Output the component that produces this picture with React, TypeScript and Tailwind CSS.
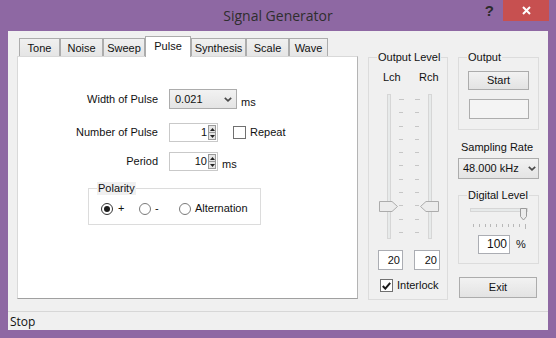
import React from 'react';

const tabs = [
  { name: 'Tone', cls: 'w-[41px]' },
  { name: 'Noise', cls: 'w-[43px]' },
  { name: 'Sweep', cls: 'w-[42px]' },
  { name: 'Pulse', cls: 'w-[46px]', active: true },
  { name: 'Synthesis', cls: 'w-[55px]' },
  { name: 'Scale', cls: 'w-[43px]' },
  { name: 'Wave', cls: 'w-[39px]' },
];

function Chevron() {
  return (
    <svg width="8" height="5" viewBox="0 0 8 5">
      <path d="M0.8 0.8 L4 3.8 L7.2 0.8" stroke="#4a4a4a" strokeWidth="1.7" fill="none" />
    </svg>
  );
}

function Spin() {
  return (
    <div className="flex h-[15px] w-[8px] flex-col border border-[#9a9a9a] bg-[#e6e6e6]">
      <div className="flex flex-1 items-center justify-center border-b border-[#9a9a9a]">
        <svg width="5" height="3" viewBox="0 0 5 3">
          <path d="M0 3 L2.5 0 L5 3Z" fill="#222" />
        </svg>
      </div>
      <div className="flex flex-1 items-center justify-center">
        <svg width="5" height="3" viewBox="0 0 5 3">
          <path d="M0 0 L2.5 3 L5 0Z" fill="#222" />
        </svg>
      </div>
    </div>
  );
}

function SpinBox({ value }: { value: string }) {
  return (
    <div className="flex h-[19px] w-[49px] items-center justify-end gap-[1px] border border-[#c9c9c9] bg-white pr-[1px]">
      <span className="leading-none">{value}</span>
      <Spin />
    </div>
  );
}

function Check({ checked }: { checked?: boolean }) {
  return (
    <div className="flex h-[13px] w-[13px] items-center justify-center border border-[#707070] bg-white">
      {checked && (
        <svg width="9" height="8" viewBox="0 0 9 8">
          <path d="M0.8 4 L3.3 6.6 L8.2 0.8" stroke="#1a1a1a" strokeWidth="2" fill="none" />
        </svg>
      )}
    </div>
  );
}

function Radio({ checked }: { checked?: boolean }) {
  return (
    <div
      className={`flex h-[12px] w-[12px] items-center justify-center rounded-full border bg-white ${
        checked ? 'border-[#333333]' : 'border-[#7a7a7a]'
      }`}
    >
      {checked && <div className="h-[6px] w-[6px] rounded-full bg-[#1c1c1c]" />}
    </div>
  );
}

function Group({ label, className, children }: { label: string; className: string; children?: React.ReactNode }) {
  return (
    <div className={`relative border border-[#dcdcdc] ${className}`}>
      <span className="absolute -top-[7px] left-[8px] bg-[#f0f0f0] px-[1px] leading-[13px]">{label}</span>
      {children}
    </div>
  );
}

function Ticks() {
  return (
    <div className="flex h-full flex-col justify-between pt-[5px] pb-[6px]">
      {Array.from({ length: 11 }).map((_, i) => (
        <div key={i} className={`h-[1px] bg-[#c6c6c6] ${i === 0 ? 'w-[5px]' : 'w-[4px]'}`} />
      ))}
    </div>
  );
}

function VSlider({ flip }: { flip?: boolean }) {
  return (
    <div className="relative flex h-full w-[20px] justify-center">
      <div className="h-full w-[4px] border border-[#d6d6d6] bg-[#e7eaea]" />
      <svg className="absolute left-0 top-[107px]" width="19" height="11" viewBox="0 0 19 11">
        <path
          d={flip ? 'M18.5 0.5 H6 L0.5 5.5 L6 10.5 H18.5 Z' : 'M0.5 0.5 H13 L18.5 5.5 L13 10.5 H0.5 Z'}
          fill="#ececec"
          stroke="#acacac"
        />
      </svg>
    </div>
  );
}

export default function App() {
  return (
    <div className="flex h-[338px] w-[556px] flex-col bg-[#8e68a3] font-['Liberation_Sans',Arial,sans-serif] text-[11px] leading-[13px] text-[#111]">
      {/* Title bar */}
      <div className="grid h-[31px] grid-cols-[1fr_auto_1fr] items-center">
        <div />
        <span className="font-['Open_Sans',sans-serif] text-[14px] leading-[18px] text-[#2e2e2e]">Signal Generator</span>
        <div className="flex items-start justify-end self-start pr-[7px]">
          <span className="mr-[9px] mt-[3px] text-[15px] font-bold leading-[15px] text-[#2b2b2b]">?</span>
          <div className="flex h-[21px] w-[46px] items-center justify-center bg-[#c75050]">
            <svg width="9" height="9" viewBox="0 0 9 9">
              <path d="M1 1 L8 8 M8 1 L1 8" stroke="#fff" strokeWidth="2" />
            </svg>
          </div>
        </div>
      </div>

      {/* Client */}
      <div className="mx-[8px] flex h-[299px] flex-col bg-[#f0f0f0]">
        <div className="flex h-[280px] items-start pl-[9px] pt-[5px]">
          {/* Tab control */}
          <div className="flex w-[341px] flex-col">
            <div className="flex h-[20px] items-end pl-[2px]">
              {tabs.map((t) =>
                t.active ? (
                  <div
                    key={t.name}
                    className={`${t.cls} relative z-10 -mb-[1px] flex h-[21px] items-start justify-center border border-b-0 border-[#acacac] bg-white pt-[3px]`}
                  >
                    {t.name}
                  </div>
                ) : (
                  <div
                    key={t.name}
                    className={`${t.cls} flex h-[18px] items-center justify-center border border-b-0 border-[#acacac] bg-gradient-to-b from-[#f0f0f0] to-[#e5e5e5] pt-[2px]`}
                  >
                    {t.name}
                  </div>
                )
              )}
            </div>
            <div className="h-[243px] border border-[#d9d9d9] border-b-[#a0a0a0] border-r-[#b4b4b4] bg-white pt-[32px]">
              <div className="flex h-[20px] items-center">
                <span className="w-[140px] text-right">Width of Pulse</span>
                <div className="ml-[11px] flex h-[20px] w-[68px] items-center justify-between border border-[#acacac] bg-gradient-to-b from-[#f2f2f2] to-[#e4e4e4] pl-[5px] pr-[4px]">
                  <span>0.021</span>
                  <Chevron />
                </div>
                <span className="ml-[4px] self-end">ms</span>
              </div>
              <div className="mt-[14px] flex h-[19px] items-center">
                <span className="w-[140px] text-right">Number of Pulse</span>
                <div className="ml-[11px]">
                  <SpinBox value="1" />
                </div>
                <div className="ml-[15px]">
                  <Check />
                </div>
                <span className="ml-[4px]">Repeat</span>
              </div>
              <div className="mt-[10px] flex h-[19px] items-center">
                <span className="w-[140px] text-right">Period</span>
                <div className="ml-[11px]">
                  <SpinBox value="10" />
                </div>
                <span className="ml-[4px] self-end">ms</span>
              </div>
              <Group label="Polarity" className="ml-[70px] mt-[17px] h-[37px] w-[173px]">
                <div className="flex items-center pl-[12px] pt-[13px]">
                  <div className="flex w-[38px] items-center gap-[5px]">
                    <Radio checked />
                    <span>+</span>
                  </div>
                  <div className="flex w-[40px] items-center gap-[4px]">
                    <Radio />
                    <span>-</span>
                  </div>
                  <div className="flex items-center gap-[4px]">
                    <Radio />
                    <span>Alternation</span>
                  </div>
                </div>
              </Group>
            </div>
          </div>

          {/* Output level */}
          <Group label="Output Level" className="ml-[10px] mt-[21px] h-[243px] w-[80px]">
            <div className="flex pl-[14px] pt-[13px]">
              <span className="w-[36px]">Lch</span>
              <span>Rch</span>
            </div>
            <div className="mt-[10px] flex h-[145px] pl-[10px]">
              <VSlider />
              <Ticks />
              <div className="w-[11px]" />
              <Ticks />
              <VSlider flip />
            </div>
            <div className="mt-[11px] flex pl-[9px]">
              <div className="flex h-[20px] w-[25px] items-center justify-end border border-[#abadb3] bg-white pr-[2px]">20</div>
              <div className="ml-[11px] flex h-[20px] w-[26px] items-center justify-end border border-[#abadb3] bg-white pr-[2px]">20</div>
            </div>
            <div className="mt-[9px] flex items-center pl-[11px]">
              <Check checked />
              <span className="ml-[4px]">Interlock</span>
            </div>
          </Group>

          {/* Right column */}
          <div className="ml-[10px] mt-[21px] flex w-[81px] flex-col">
            <Group label="Output" className="h-[73px] w-[81px]">
              <div className="ml-[9px] mt-[13px] flex h-[19px] w-[61px] items-center justify-center border border-[#acacac] bg-gradient-to-b from-[#f2f2f2] to-[#e3e3e3]">
                Start
              </div>
              <div className="ml-[10px] mt-[9px] h-[20px] w-[60px] border border-[#adadad] bg-[#f4f4f4]" />
            </Group>
            <span className="mt-[11px] pl-[3px]">Sampling Rate</span>
            <div className="mt-[4px] flex h-[21px] w-[81px] items-center justify-between border border-[#acacac] bg-gradient-to-b from-[#f2f2f2] to-[#e4e4e4] pl-[4px] pr-[2px]">
              <span>48.000 kHz</span>
              <Chevron />
            </div>
            <Group label="Digital Level" className="mt-[16px] h-[69px] w-[81px]">
              <div className="relative ml-[11px] mt-[12px] h-[13px] w-[58px]">
                <div className="mt-[4px] h-[4px] w-full border border-[#d6d6d6] bg-[#e7eaea]" />
                <svg className="absolute right-[1px] top-0" width="7" height="13" viewBox="0 0 7 13">
                  <path d="M0.5 0.5 H6.5 V8.5 L3.5 12 L0.5 8.5 Z" fill="#ececec" stroke="#9a9a9a" />
                </svg>
              </div>
              <div className="ml-[14px] mt-[3px] flex w-[53px] items-start justify-between">
                {Array.from({ length: 10 }).map((_, i) => (
                  <div key={i} className={`w-[1px] bg-[#b8b8b8] ${i === 9 ? 'h-[5px]' : 'h-[3px]'}`} />
                ))}
              </div>
              <div className="ml-[19px] mt-[6px] flex items-center">
                <div className="flex h-[19px] w-[32px] items-center justify-end border border-[#abadb3] bg-white pr-[2px] text-[12px]">100</div>
                <span className="ml-[6px]">%</span>
              </div>
            </Group>
            <div className="ml-[1px] mt-[13px] flex h-[21px] w-[78px] items-center justify-center border border-[#acacac] bg-gradient-to-b from-[#f2f2f2] to-[#e3e3e3]">
              Exit
            </div>
          </div>
        </div>

        {/* Status bar */}
        <div className="flex h-[19px] items-center border-t border-[#d7d7d7] pl-[2px] font-['Open_Sans',sans-serif] text-[12px]">
          Stop
        </div>
      </div>
    </div>
  );
}
